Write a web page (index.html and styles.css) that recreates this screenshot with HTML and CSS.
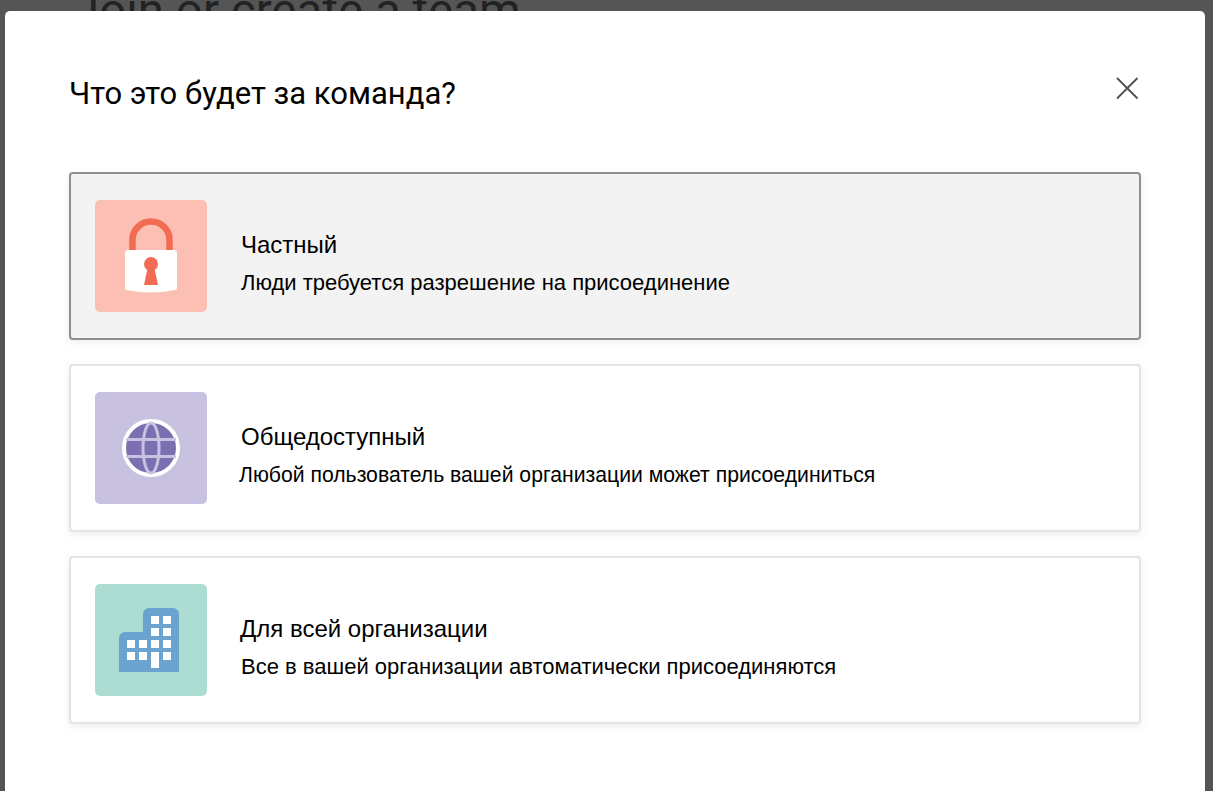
FILE: index.html
```html
<!DOCTYPE html>
<html lang="ru">
   <head>
      <title>Join or create a team</title>
      <meta charset="UTF-8">
      <link rel="stylesheet" href="styles.css">
   </head>
   <body>
      <h1 class="page-title">Join or create a team</h1>
      <div class="modal">
         <div class="modal-head">
            <h2>Что это будет за команда?</h2>
            <svg class="close" width="24" height="24" viewBox="0 0 24 24">
               <path d="M1 2 L21.5 22.5 M21.5 2 L1 22.5" stroke="#505050" stroke-width="1.8" fill="none"/>
            </svg>
         </div>
         <div class="card selected">
            <svg class="tile" width="112" height="112" viewBox="0 0 112 112">
               <rect width="112" height="112" rx="5" fill="#fbc0b3"/>
               <path d="M37.5 52 V40 a18.5 18.5 0 0 1 37 0 V52" stroke="#f26c54" stroke-width="6.5" fill="none"/>
               <path d="M33 50 H79 a3 3 0 0 1 3 3 V88 a2 2 0 0 1 -2 2 Q56 95 32 90 a2 2 0 0 1 -2 -2 V53 a3 3 0 0 1 3 -3 Z" fill="#fff"/>
               <circle cx="56" cy="64" r="7" fill="#f26c54"/>
               <path d="M53 66 H59 L63 85 H49 Z" fill="#f26c54"/>
            </svg>
            <div class="card-text">
               <div class="card-name">Частный</div>
               <div class="card-desc">Люди требуется разрешение на присоединение</div>
            </div>
         </div>
         <div class="card">
            <svg class="tile" width="112" height="112" viewBox="0 0 112 112">
               <rect width="112" height="112" rx="5" fill="#c8c2e0"/>
               <circle cx="56" cy="56" r="27" fill="#7b6fb1" stroke="#fff" stroke-width="4"/>
               <ellipse cx="56" cy="56" rx="8" ry="25" fill="none" stroke="#c8c2e0" stroke-width="3"/>
               <path d="M31 47.5 H81 M31 64.5 H81" stroke="#c8c2e0" stroke-width="3"/>
            </svg>
            <div class="card-text">
               <div class="card-name">Общедоступный</div>
               <div class="card-desc card-desc-small">Любой пользователь вашей организации может присоединиться</div>
            </div>
         </div>
         <div class="card">
            <svg class="tile" width="112" height="112" viewBox="0 0 112 112">
               <rect width="112" height="112" rx="5" fill="#addcd2"/>
               <path d="M24 88 V54 a6 6 0 0 1 6 -6 H48 V30 a6 6 0 0 1 6 -6 H78 a6 6 0 0 1 6 6 V88 Z" fill="#6aa3cf"/>
               <g fill="#fff">
                  <rect x="56" y="32" width="8" height="8"/>
                  <rect x="68" y="32" width="8" height="8"/>
                  <rect x="56" y="44" width="8" height="8"/>
                  <rect x="68" y="44" width="8" height="8"/>
                  <rect x="32" y="56" width="8" height="8"/>
                  <rect x="44" y="56" width="8" height="8"/>
                  <rect x="56" y="56" width="8" height="8"/>
                  <rect x="68" y="56" width="8" height="8"/>
                  <rect x="32" y="68" width="8" height="8"/>
                  <rect x="44" y="68" width="8" height="8"/>
                  <rect x="56" y="68" width="8" height="16"/>
                  <rect x="68" y="68" width="8" height="8"/>
               </g>
            </svg>
            <div class="card-text">
               <div class="card-name shift-1">Для всей организации</div>
               <div class="card-desc">Все в вашей организации автоматически присоединяются</div>
            </div>
         </div>
      </div>
   </body>
</html>
```

FILE: styles.css
```css
*
{ box-sizing:border-box;}
html
{ background-color:#555;}
body
{ margin:0;
  height:791px;
  overflow:hidden;
  font-family:"Liberation Sans", Arial, sans-serif;
  color:#000;}
.page-title
{ margin:-16px 0 0 73px;
  font-family:Roboto, sans-serif;
  font-size:47.5px;
  line-height:54px;
  font-weight:400;
  color:#222;}
.modal
{ position:absolute;
  left:5px;
  top:11px;
  width:1200px;
  height:800px;
  padding:0 64px;
  border-radius:5px 5px 0 0;
  background-color:#fff;}
.modal-head
{ display:flex;
  justify-content:space-between;
  align-items:center;
  height:161px;
  padding:0 2px 0 0;}
.modal-head h2
{ margin:4px 0 0;
  font-family:Roboto, sans-serif;
  font-size:31px;
  font-weight:400;}
.close
{ margin:0 -1px 8px 0;}
.card
{ display:flex;
  align-items:center;
  gap:34px;
  height:168px;
  margin-bottom:24px;
  padding:0 24px;
  border:2px solid #e3e3e3;
  border-radius:4px;
  background-color:#fff;
  box-shadow:0 3px 8px rgba(0, 0, 0, .07);}
.card.selected
{ border-color:#8f8f8f;
  background-color:#f3f3f3;}
.tile
{ display:block;
  flex:none;}
.card-text
{ padding-top:15px;}
.card-name
{ font-size:24px;
  line-height:28px;}
.card-desc
{ margin-top:10px;
  font-size:22px;
  line-height:28px;}
.card-desc-small
{ margin-left:-2px;
  font-size:21.2px;}
.shift-1
{ margin-left:-1px;}
```
